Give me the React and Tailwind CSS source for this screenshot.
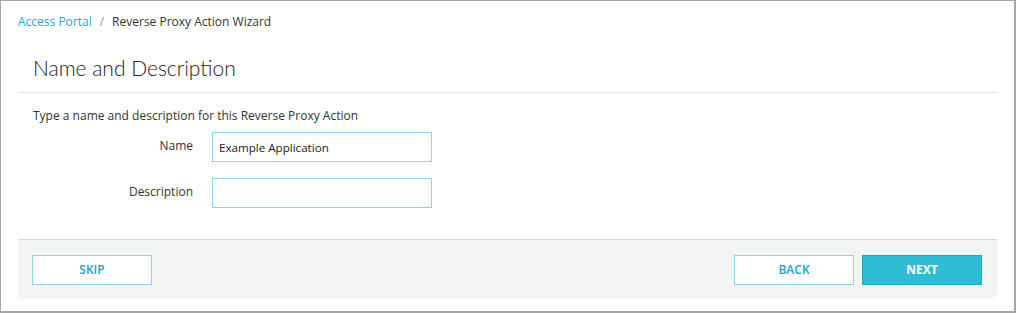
export default function App() {
  return (
    <div className="w-[1016px] h-[313px] bg-white" style={{ fontFamily: '"Open Sans", sans-serif' }}>
      <div className="h-[313px] border border-r-2 border-b-2 border-[#a6a6a6] px-[17px] flex flex-col">
        {/* Breadcrumb */}
        <div className="pt-[13px] text-[12px] leading-[16px] text-[#333]">
          <a href="#" className="text-[#29a7d4]">Access Portal</a>
          <span className="mx-[8px] text-[#999]">/</span>
          <span>Reverse Proxy Action Wizard</span>
        </div>

        {/* Header */}
        <div className="mt-[26px] pb-[12px] border-b border-[#e3e3e3] pl-[15px]">
          <h1 className="text-[21px] leading-[24px] font-light text-[#222]" style={{ fontFamily: 'Lato, sans-serif' }}>
            Name and Description
          </h1>
        </div>

        {/* Form */}
        <div className="pl-[15px]">
          <p className="mt-[15px] text-[12px] leading-[16px] text-[#333]">
            Type a name and description for this Reverse Proxy Action
          </p>
          <div className="mt-[8px] flex flex-col gap-[16px]">
            <div className="flex items-center">
              <label className="w-[160px] text-right text-[12px] text-[#333] -mt-[2px]">Name</label>
              <input
                type="text"
                defaultValue="Example Application"
                className="ml-[19px] w-[220px] h-[30px] border border-[#86d8e8] px-[6px] text-[11.6px] text-[#222] focus:outline-none"
              />
            </div>
            <div className="flex items-center">
              <label className="w-[160px] text-right text-[12px] text-[#333] -mt-[2px]">Description</label>
              <input
                type="text"
                className="ml-[19px] w-[220px] h-[30px] border border-[#86d8e8] px-[6px] text-[11.6px] text-[#222] focus:outline-none"
              />
            </div>
          </div>
        </div>

        {/* Footer */}
        <div className="mt-[31px] h-[60px] border-t border-[#d9d9d9] bg-[#f3f4f4] rounded-b-[6px] flex items-center justify-between pl-[14px] pr-[15px]">
          <button className="w-[120px] h-[30px] bg-white border border-[#86d8e8] text-[12px] font-semibold text-[#1d9fcb]">
            SKIP
          </button>
          <div className="flex gap-[8px]">
            <button className="w-[120px] h-[30px] bg-white border border-[#86d8e8] text-[12px] font-semibold text-[#1d9fcb]">
              BACK
            </button>
            <button className="w-[120px] h-[30px] bg-[#2ebdd5] border border-[#1fa9c3] text-[12px] font-bold text-white">
              NEXT
            </button>
          </div>
        </div>
      </div>
    </div>
  );
}
